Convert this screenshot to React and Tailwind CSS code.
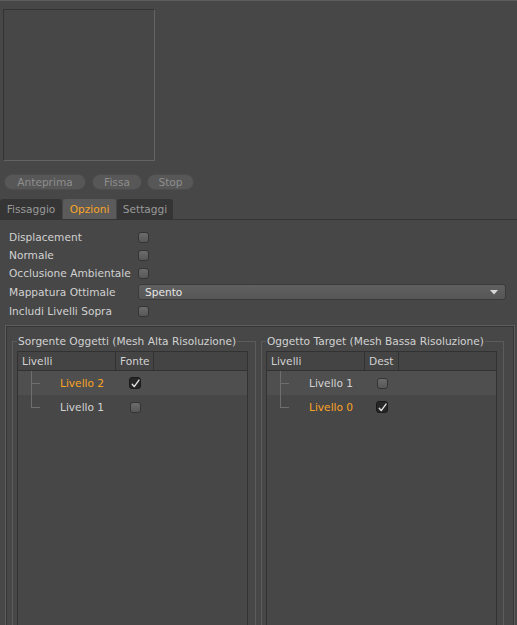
import React from 'react'

function Check({ on }) {
  if (on) {
    return (
      <span className="w-[12px] h-[12px] rounded-[3px] bg-[#262626] border border-[#1a1a1a] flex items-center justify-center">
        <svg viewBox="0 0 10 10" className="w-[9px] h-[9px]">
          <path d="M1.4 5.8 L3.6 8.5 L8.9 1.2" fill="none" stroke="#e4e4e4" strokeWidth="1.5" strokeLinecap="round" strokeLinejoin="round" />
        </svg>
      </span>
    )
  }
  return <span className="block w-[11px] h-[11px] rounded-[3px] bg-gradient-to-b from-[#6c6c6c] to-[#575757] border border-[#343434]" />
}

function PillButton({ label, w }) {
  return (
    <div className={`${w} h-[16px] rounded-full bg-[#575757] border border-[#4d4d4d] flex items-center justify-center text-[#8e8e8e]`}>
      {label}
    </div>
  )
}

function Tab({ label, active, w }) {
  return (
    <div
      className={`${w} h-[20px] rounded-t-[3px] flex items-center justify-center ${
        active ? 'bg-[#5b5b5b] text-[#f9a324]' : 'bg-[#353535] text-[#9a9a9a]'
      }`}
    >
      {label}
    </div>
  )
}

function OptionRow({ label, h = 'h-[18px]', children }) {
  return (
    <div className={`grid grid-cols-[129px_1fr] items-center ${h}`}>
      <span className="text-[#d2d2d2] whitespace-nowrap">{label}</span>
      <div className="flex items-center">{children}</div>
    </div>
  )
}

function LayerList({ col, colClass, rows }) {
  return (
    <div className="border border-[#323232] h-[300px]">
      <div className="flex h-[19px] bg-[#444] border-b border-[#323232] text-[#d2d2d2]">
        <div className="w-[98px] pl-[4px] flex items-center border-r border-[#323232]">Livelli</div>
        <div className={`${colClass} pl-[4px] flex items-center border-r border-[#323232]`}>{col}</div>
        <div className="flex-1" />
      </div>
      {rows.map((r, i) => (
        <div key={r.name} className={`h-[24px] flex items-center ${i === 0 ? 'bg-[#4f4f4f]' : ''}`}>
          <div className="w-[98px] h-full flex items-center">
            <div className="w-[13px]" />
            <div className="relative w-[29px] h-full">
              <div className={`absolute left-0 top-0 w-px bg-[#6e6e6e] ${i === 0 ? 'h-full' : 'h-[12px]'}`} />
              <div className="absolute left-0 top-[12px] w-[9px] h-px bg-[#6e6e6e]" />
            </div>
            <span className={r.active ? 'text-[#f9a324]' : 'text-[#d2d2d2]'}>{r.name}</span>
          </div>
          <div className={`${colClass} flex justify-center`}>
            <Check on={r.on} />
          </div>
        </div>
      ))}
    </div>
  )
}

export default function App() {
  return (
    <div className="w-[517px] h-[625px] overflow-hidden bg-[#474747] border-t border-[#5e5e5e] flex flex-col text-[10.6px] leading-none font-['DejaVu_Sans',sans-serif]">
      {/* preview */}
      <div className="pl-[3px] pt-[8px]">
        <div className="w-[152px] h-[152px] border border-t-[#333] border-l-[#333] border-r-[#636363] border-b-[#636363]" />
      </div>

      {/* render buttons */}
      <div className="flex pl-[4px] mt-[13px]">
        <PillButton label="Anteprima" w="w-[82px]" />
        <div className="w-[6px]" />
        <PillButton label="Fissa" w="w-[50px]" />
        <div className="w-[5px]" />
        <PillButton label="Stop" w="w-[47px]" />
      </div>

      {/* tabs */}
      <div className="flex gap-px mt-[9px] border-b border-[#353535]">
        <Tab label="Fissaggio" w="w-[62px]" />
        <Tab label="Opzioni" w="w-[53px]" active />
        <Tab label="Settaggi" w="w-[56px]" />
      </div>

      {/* options */}
      <div className="pl-[9px] pr-[11px] pt-[8px]">
        <OptionRow label="Displacement"><Check /></OptionRow>
        <OptionRow label="Normale"><Check /></OptionRow>
        <OptionRow label="Occlusione Ambientale"><Check /></OptionRow>
        <OptionRow label="Mappatura Ottimale" h="h-[20px]">
          <div className="w-full h-[16px] rounded-[3px] bg-gradient-to-b from-[#606060] to-[#565656] border border-[#3a3a3a] flex items-center justify-between pl-[6px] pr-[7px] text-[#e6e6e6]">
            <span>Spento</span>
            <svg viewBox="0 0 8 5" className="w-[8px] h-[5px]">
              <path d="M0 0 H8 L4 4.5 Z" fill="#d8d8d8" />
            </svg>
          </div>
        </OptionRow>
        <OptionRow label="Includi Livelli Sopra"><Check /></OptionRow>
      </div>

      {/* source / target groups */}
      <div className="flex-1 ml-[5px] mr-[2px] mt-[5px] border border-[#5c5c5c] border-b-0">
        <div className="h-full border border-[#363636] border-b-0 pl-[5px] pr-[8px] pt-[8px] flex gap-[5px]">
          <fieldset className="w-[244px] border border-[#5c5c5c] pl-[4px] pr-[7px]">
            <legend className="px-[1px] text-[#d2d2d2] leading-[13px]">Sorgente Oggetti (Mesh Alta Risoluzione)</legend>
            <div className="mt-[3px]">
              <LayerList
                col="Fonte"
                colClass="w-[38px]"
                rows={[
                  { name: 'Livello 2', active: true, on: true },
                  { name: 'Livello 1', active: false, on: false },
                ]}
              />
            </div>
          </fieldset>
          <fieldset className="w-[243px] border border-[#5c5c5c] pl-[4px] pr-[6px]">
            <legend className="px-[1px] text-[#d2d2d2] leading-[13px]">Oggetto Target (Mesh Bassa Risoluzione)</legend>
            <div className="mt-[3px]">
              <LayerList
                col="Dest"
                colClass="w-[34px]"
                rows={[
                  { name: 'Livello 1', active: false, on: false },
                  { name: 'Livello 0', active: true, on: true },
                ]}
              />
            </div>
          </fieldset>
        </div>
      </div>
    </div>
  )
}
